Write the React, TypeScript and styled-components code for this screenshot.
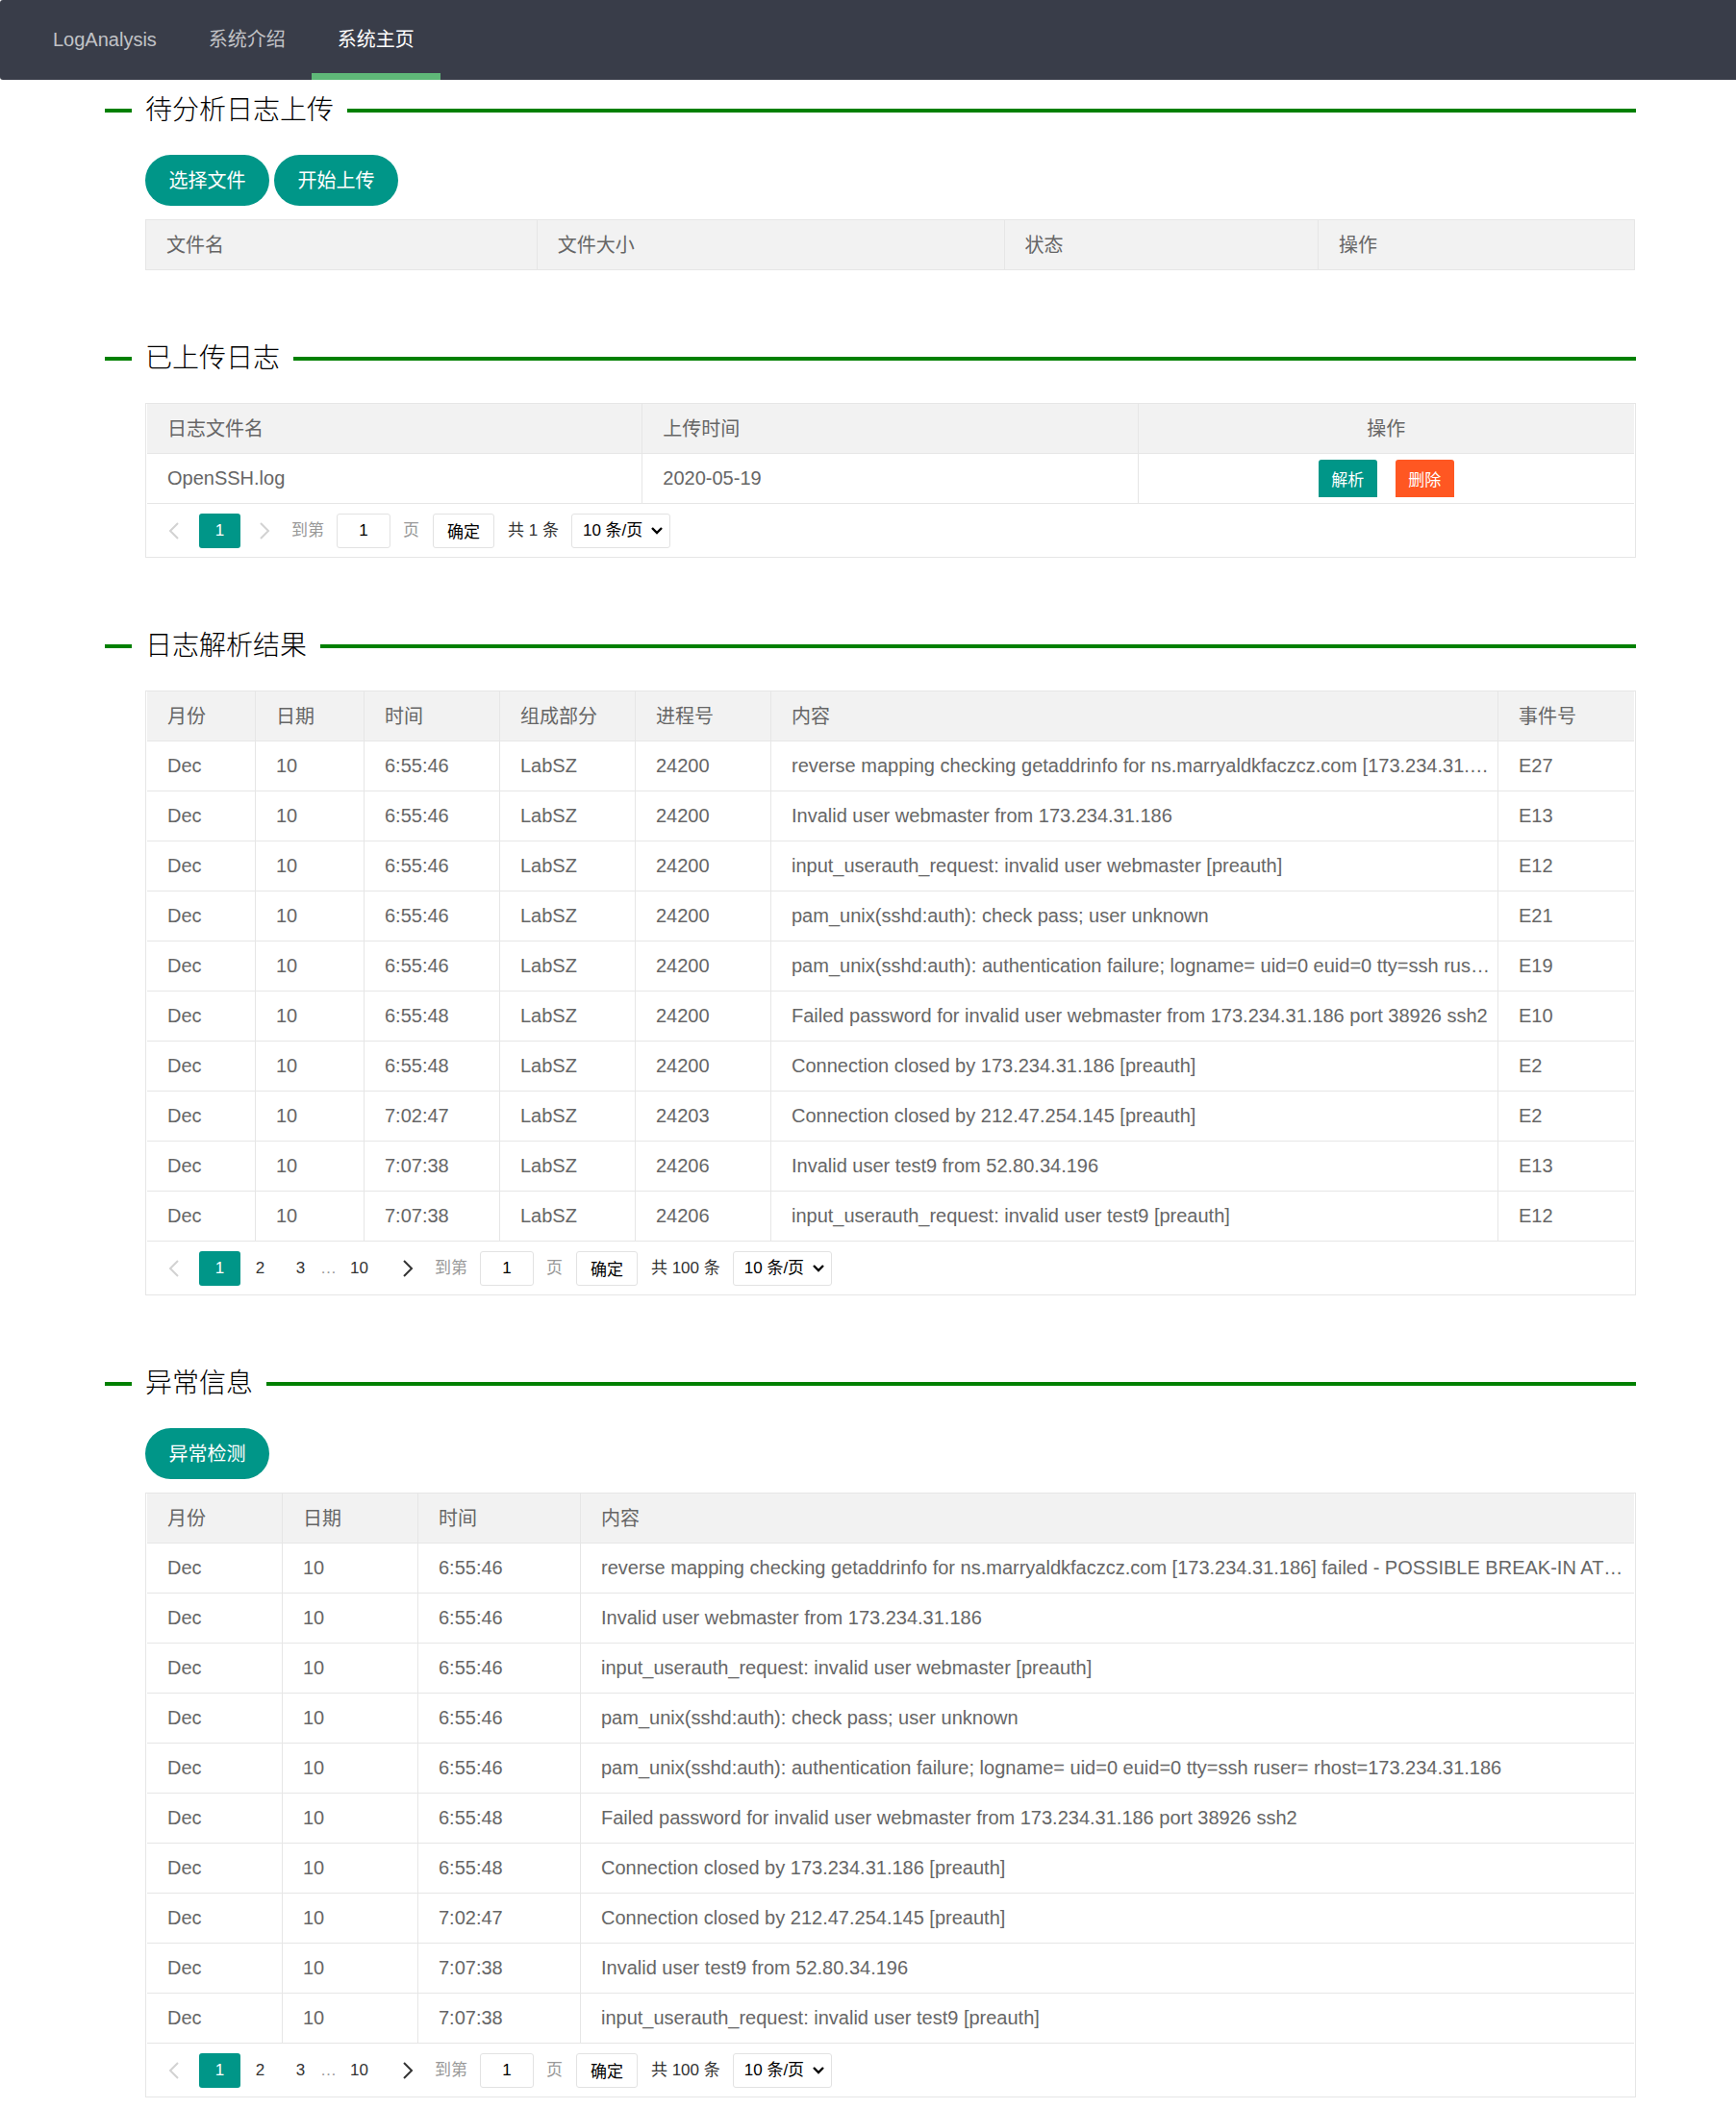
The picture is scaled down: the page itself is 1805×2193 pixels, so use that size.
import React from "react";
import styled, { createGlobalStyle, css } from "styled-components";

const GlobalStyle = createGlobalStyle`
  *, *::before, *::after { box-sizing: border-box; }
  body {
    margin: 0;
    background: #fff;
    color: #333;
    font-family: "Liberation Sans", "Noto Sans CJK SC", sans-serif;
    font-size: 20px;
    line-height: 28px;
  }
  button, input, select { font-family: inherit; }
`;

/* ---------- navigation ---------- */

const Nav = styled.nav`
  display: flex;
  height: 83px;
  padding: 0 28px;
  background: #393d49;
  border-radius: 3px 0 0 3px;
`;

const NavLink = styled.a<{ $active?: boolean }>`
  display: flex;
  align-items: center;
  padding: 5px 27px 0;
  border-bottom: 7px solid ${(p) => (p.$active ? "#5fb878" : "transparent")};
  color: ${(p) => (p.$active ? "#fff" : "rgba(255, 255, 255, 0.7)")};
  text-decoration: none;
  white-space: nowrap;
`;

/* ---------- page sections ---------- */

const Main = styled.main`
  padding: 14px 104px 12px 109px;
`;

const Section = styled.section`
  & + & {
    margin-top: 74px;
  }
`;

const Title = styled.h2`
  display: flex;
  align-items: center;
  gap: 14px;
  margin: 0 0 28px;
  color: #000;
  font-size: 28px;
  font-weight: 300;
  line-height: 36px;
  white-space: nowrap;

  &::before,
  &::after {
    content: "";
    height: 4px;
    background: green;
  }
  &::before {
    width: 28px;
  }
  &::after {
    flex: 1;
  }
`;

const Body = styled.div`
  padding-left: 42px;
`;

const Actions = styled.div`
  display: flex;
  gap: 5px;
  margin-bottom: 14px;
`;

const RoundButton = styled.button`
  min-width: 129px;
  height: 53px;
  padding: 0 24px 2px;
  border: 0;
  border-radius: 27px;
  background: #009688;
  color: #fff;
  font-size: 20px;
  cursor: pointer;
`;

/* ---------- tables ---------- */

const Frame = styled.div<{ $inset?: boolean }>`
  border: 1px solid #e6e6e6;
  ${(p) =>
    p.$inset
      ? css`
          padding: 0 1px;
        `
      : css`
          margin-right: 1px;
          border-bottom: 0;
        `}
`;

const Table = styled.table`
  width: 100%;
  table-layout: fixed;
  border-collapse: separate;
  border-spacing: 0;
  color: #666;
`;

const cell = css<{ $center?: boolean }>`
  height: 52px;
  padding: 0 1px 0 21px;
  border-right: 1px solid #e6e6e6;
  border-bottom: 1px solid #e6e6e6;
  overflow: hidden;
  text-overflow: ellipsis;
  white-space: nowrap;
  text-align: ${(p) => (p.$center ? "center" : "left")};
  &:last-child {
    border-right: 0;
  }
`;

const Th = styled.th`
  ${cell}
  ${(p) => p.$center && "padding: 0;"}
  background: #f2f2f2;
  font-weight: 400;
`;

const Td = styled.td`
  ${cell}
  padding-bottom: 2px;
  ${(p) => p.$center && "padding: 0;"}
`;

const RowActions = styled.div`
  display: flex;
  justify-content: center;
  gap: 19px;
`;

const RowButton = styled.button<{ $danger?: boolean }>`
  min-width: 61px;
  height: 39px;
  padding: 0 13px;
  border: 0;
  border-radius: 3px 3px 0 0;
  background: ${(p) => (p.$danger ? "#ff5722" : "#009688")};
  color: #fff;
  font-size: 17px;
  cursor: pointer;
`;

/* ---------- pager ---------- */

const PagerBar = styled.div`
  display: flex;
  align-items: center;
  height: 55px;
  padding-left: 2px;
  font-size: 17px;
  line-height: 36px;
  white-space: nowrap;
`;

const PageList = styled.div`
  display: flex;
  align-items: center;
  margin-right: 2px;
`;

const PageButton = styled.button<{ $current?: boolean }>`
  min-width: 43px;
  height: 36px;
  padding: 0 16px;
  margin-right: -1px;
  border: 0;
  border-radius: 3px;
  background: ${(p) => (p.$current ? "#009688" : "transparent")};
  color: ${(p) => (p.$current ? "#fff" : "#333")};
  font-size: 17px;
  cursor: pointer;
`;

const StepButton = styled.button`
  display: flex;
  align-items: center;
  justify-content: center;
  width: 52px;
  height: 36px;
  padding: 0;
  border: 0;
  background: transparent;
  color: #333;
  cursor: pointer;

  &:disabled {
    color: #d2d2d2;
    cursor: default;
  }
`;

const Dots = styled.span`
  width: 15px;
  color: #999;
  text-align: center;
`;

const Jump = styled.label`
  display: flex;
  align-items: center;
  gap: 13px;
  margin-right: 14px;
  color: #999;
`;

const JumpInput = styled.input`
  width: 56px;
  height: 36px;
  padding: 0;
  border: 1px solid #e2e2e2;
  border-radius: 3px;
  background: #fff;
  color: #000;
  font-size: 17px;
  text-align: center;
`;

const ConfirmButton = styled.button`
  width: 64px;
  height: 36px;
  padding: 0 0 1px;
  border: 1px solid #e2e2e2;
  border-radius: 3px;
  background: #fff;
  color: #000;
  font-size: 17px;
  cursor: pointer;
`;

const Total = styled.span`
  margin: 0 13px 0 14px;
`;

const SelectBox = styled.div`
  display: grid;
  grid-template-columns: 1fr 20px;
  align-items: center;
  width: 103px;

  svg {
    grid-area: 1 / 2;
    pointer-events: none;
  }
`;

const Select = styled.select`
  grid-area: 1 / 1 / 2 / 3;
  width: 100%;
  height: 36px;
  padding: 0 0 0 11px;
  border: 1px solid #e2e2e2;
  border-radius: 3px;
  background: #fff;
  color: #000;
  font-size: 17px;
  appearance: none;
`;

const Chevron = ({ next }: { next?: boolean }) => (
  <svg width="12" height="18" viewBox="0 0 12 18" fill="none" stroke="currentColor" strokeWidth="2" aria-hidden="true">
    <path d={next ? "M2 1l8 8-8 8" : "M10 1L2 9l8 8"} />
  </svg>
);

type PagerProps = { id: string; total: number; pages: (number | "…")[] };

function Pager({ id, total, pages }: PagerProps) {
  return (
    <PagerBar>
      <PageList>
        <StepButton disabled aria-label="上一页">
          <Chevron />
        </StepButton>
        {pages.map((p) =>
          p === "…" ? (
            <Dots key={p}>{p}</Dots>
          ) : (
            <PageButton key={p} $current={p === 1}>
              {p}
            </PageButton>
          )
        )}
        <StepButton disabled={pages.length === 1} aria-label="下一页">
          <Chevron next />
        </StepButton>
      </PageList>
      <Jump htmlFor={`${id}-page`}>
        到第
        <JumpInput id={`${id}-page`} type="text" defaultValue="1" />
        页
      </Jump>
      <ConfirmButton>确定</ConfirmButton>
      <Total>共 {total} 条</Total>
      <SelectBox>
        <Select aria-label="每页条数" defaultValue="10">
          <option value="10">10 条/页</option>
          <option value="20">20 条/页</option>
          <option value="50">50 条/页</option>
        </Select>
        <svg width="12" height="8" viewBox="0 0 12 8" fill="none" stroke="#000" strokeWidth="2.4" aria-hidden="true">
          <path d="M1 1l5 5 5-5" />
        </svg>
      </SelectBox>
    </PagerBar>
  );
}

/* ---------- data ---------- */

type Log = [time: string, pid: string, content: string, event: string];

const logs: Log[] = [
  ["6:55:46", "24200", "reverse mapping checking getaddrinfo for ns.marryaldkfaczcz.com [173.234.31.186] failed - POSSIBLE BREAK-IN ATTEMPT!", "E27"],
  ["6:55:46", "24200", "Invalid user webmaster from 173.234.31.186", "E13"],
  ["6:55:46", "24200", "input_userauth_request: invalid user webmaster [preauth]", "E12"],
  ["6:55:46", "24200", "pam_unix(sshd:auth): check pass; user unknown", "E21"],
  ["6:55:46", "24200", "pam_unix(sshd:auth): authentication failure; logname= uid=0 euid=0 tty=ssh ruser= rhost=173.234.31.186", "E19"],
  ["6:55:48", "24200", "Failed password for invalid user webmaster from 173.234.31.186 port 38926 ssh2", "E10"],
  ["6:55:48", "24200", "Connection closed by 173.234.31.186 [preauth]", "E2"],
  ["7:02:47", "24203", "Connection closed by 212.47.254.145 [preauth]", "E2"],
  ["7:07:38", "24206", "Invalid user test9 from 52.80.34.196", "E13"],
  ["7:07:38", "24206", "input_userauth_request: invalid user test9 [preauth]", "E12"],
];

type GridProps = { widths: (string | undefined)[]; heads: string[]; rows: string[][] };

function DataTable({ widths, heads, rows }: GridProps) {
  return (
    <Table>
      <colgroup>
        {widths.map((width, i) => (
          <col key={i} style={{ width }} />
        ))}
      </colgroup>
      <thead>
        <tr>
          {heads.map((h) => (
            <Th key={h} scope="col">
              {h}
            </Th>
          ))}
        </tr>
      </thead>
      {rows.length > 0 && (
        <tbody>
          {rows.map((row, r) => (
            <tr key={r}>
              {row.map((value, c) => (
                <Td key={c}>{value}</Td>
              ))}
            </tr>
          ))}
        </tbody>
      )}
    </Table>
  );
}

const manyPages: (number | "…")[] = [1, 2, 3, "…", 10];

export default function App() {
  return (
    <>
      <GlobalStyle />
      <Nav>
        <NavLink href="#">LogAnalysis</NavLink>
        <NavLink href="#intro">系统介绍</NavLink>
        <NavLink href="#home" $active aria-current="page">
          系统主页
        </NavLink>
      </Nav>
      <Main>
        <Section>
          <Title>待分析日志上传</Title>
          <Body>
            <Actions>
              <RoundButton>选择文件</RoundButton>
              <RoundButton>开始上传</RoundButton>
            </Actions>
            <Frame>
              <DataTable
                widths={["26.3%", "31.4%", "21.1%", "21.2%"]}
                heads={["文件名", "文件大小", "状态", "操作"]}
                rows={[]}
              />
            </Frame>
          </Body>
        </Section>

        <Section>
          <Title>已上传日志</Title>
          <Body>
            <Frame $inset>
              <Table>
                <thead>
                  <tr>
                    <Th scope="col">日志文件名</Th>
                    <Th scope="col">上传时间</Th>
                    <Th scope="col" $center>
                      操作
                    </Th>
                  </tr>
                </thead>
                <tbody>
                  <tr>
                    <Td>OpenSSH.log</Td>
                    <Td>2020-05-19</Td>
                    <Td $center>
                      <RowActions>
                        <RowButton>解析</RowButton>
                        <RowButton $danger>删除</RowButton>
                      </RowActions>
                    </Td>
                  </tr>
                </tbody>
              </Table>
              <Pager id="files" total={1} pages={[1]} />
            </Frame>
          </Body>
        </Section>

        <Section>
          <Title>日志解析结果</Title>
          <Body>
            <Frame $inset>
              <DataTable
                widths={["113px", "113px", "141px", "141px", "141px", undefined, "141px"]}
                heads={["月份", "日期", "时间", "组成部分", "进程号", "内容", "事件号"]}
                rows={logs.map(([time, pid, content, event]) => ["Dec", "10", time, "LabSZ", pid, content, event])}
              />
              <Pager id="parsed" total={100} pages={manyPages} />
            </Frame>
          </Body>
        </Section>

        <Section>
          <Title>异常信息</Title>
          <Body>
            <Actions>
              <RoundButton>异常检测</RoundButton>
            </Actions>
            <Frame $inset>
              <DataTable
                widths={["141px", "141px", "169px", undefined]}
                heads={["月份", "日期", "时间", "内容"]}
                rows={logs.map(([time, , content]) => ["Dec", "10", time, content])}
              />
              <Pager id="anomalies" total={100} pages={manyPages} />
            </Frame>
          </Body>
        </Section>
      </Main>
    </>
  );
}
